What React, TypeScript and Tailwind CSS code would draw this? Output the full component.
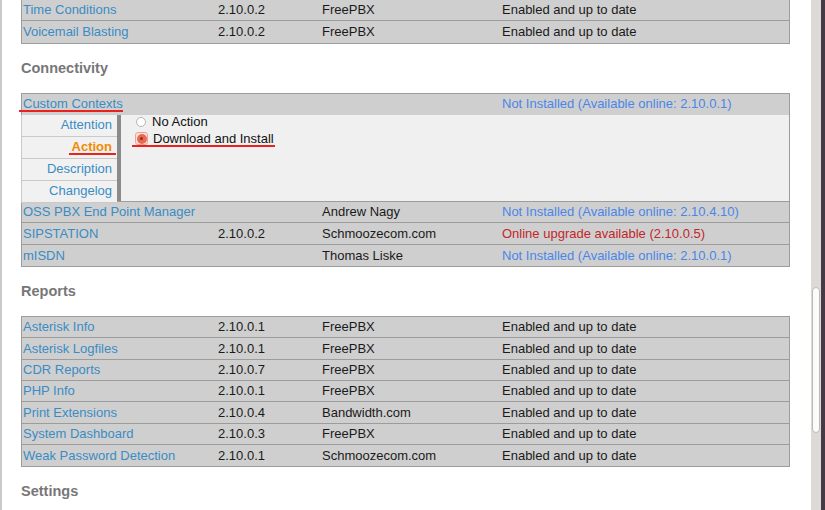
const blue = "text-[#3a8cc4]";

type Row = { name: string; version?: string; author?: string; status: string; tone?: "ok" | "new" | "up" };

const misc: Row[] = [
  { name: "Time Conditions", version: "2.10.0.2", author: "FreePBX", status: "Enabled and up to date" },
  { name: "Voicemail Blasting", version: "2.10.0.2", author: "FreePBX", status: "Enabled and up to date" },
];

const connectivity: Row[] = [
  { name: "OSS PBX End Point Manager", author: "Andrew Nagy", status: "Not Installed (Available online: 2.10.4.10)", tone: "new" },
  { name: "SIPSTATION", version: "2.10.0.2", author: "Schmoozecom.com", status: "Online upgrade available (2.10.0.5)", tone: "up" },
  { name: "mISDN", author: "Thomas Liske", status: "Not Installed (Available online: 2.10.0.1)", tone: "new" },
];

const reports: Row[] = [
  { name: "Asterisk Info", version: "2.10.0.1", author: "FreePBX", status: "Enabled and up to date" },
  { name: "Asterisk Logfiles", version: "2.10.0.1", author: "FreePBX", status: "Enabled and up to date" },
  { name: "CDR Reports", version: "2.10.0.7", author: "FreePBX", status: "Enabled and up to date" },
  { name: "PHP Info", version: "2.10.0.1", author: "FreePBX", status: "Enabled and up to date" },
  { name: "Print Extensions", version: "2.10.0.4", author: "Bandwidth.com", status: "Enabled and up to date" },
  { name: "System Dashboard", version: "2.10.0.3", author: "FreePBX", status: "Enabled and up to date" },
  { name: "Weak Password Detection", version: "2.10.0.1", author: "Schmoozecom.com", status: "Enabled and up to date" },
];

function ModuleRow({ row, last }: { row: Row; last?: boolean }) {
  const statusColor =
    row.tone === "new" ? "text-[#4a86e8]" : row.tone === "up" ? "text-[#c3262a]" : "text-[#1a1a1a]";
  return (
    <div
      className={`grid h-[21.33px] grid-cols-[196px_104px_180px_1fr] items-center bg-[#cfcfcf] ${
        last ? "" : "border-b border-[#9c9c9c]"
      }`}
    >
      <span className={`pl-px ${blue}`}>{row.name}</span>
      <span className="text-[#1a1a1a]">{row.version}</span>
      <span className="text-[#1a1a1a]">{row.author}</span>
      <span className={statusColor}>{row.status}</span>
    </div>
  );
}

function Heading({ children }: { children: string }) {
  return <h3 className="my-4 text-[14.5px] leading-[17px] font-bold text-[#777]">{children}</h3>;
}

function Tab({ label, active }: { label: string; active?: boolean }) {
  return (
    <div className="flex h-[22px] items-center justify-end border-b border-l border-[#c9c9c9] bg-[#f1f1f1] pr-[5px] pb-[2px]">
      {active ? (
        <span className="relative font-bold text-[#f28a00]">
          {label}
          <span className="absolute -left-[3px] right-[-4px] top-[16px] h-[2px] bg-[#e8231f]" />
        </span>
      ) : (
        <span className={blue}>{label}</span>
      )}
    </div>
  );
}

export default function App() {
  return (
    <div className="flex h-[510px] w-[825px] overflow-hidden bg-white font-['Liberation_Sans',Arial,sans-serif] text-[13px]">
      <div className="w-[811px] border-l-2 border-[#cacaca] pl-[19px] pr-[21px]">
        <div className="-mt-px border border-[#9c9c9c]">
          {misc.map((r, i) => (
            <ModuleRow key={r.name} row={r} last={i === misc.length - 1} />
          ))}
        </div>

        <Heading>Connectivity</Heading>
        <div className="border border-[#9c9c9c]">
          <div className="grid h-[21.33px] grid-cols-[196px_104px_180px_1fr] items-center bg-[#cfcfcf] pb-px">
            <span className={`relative pl-px ${blue}`}>
              Custom Contexts
              <span className="absolute -left-[3px] top-[16px] h-[2px] w-[104px] bg-[#e8231f]" />
            </span>
            <span />
            <span />
            <span className="text-[#4a86e8]">Not Installed (Available online: 2.10.0.1)</span>
          </div>
          <div className="flex h-[87px] border-b border-[#9c9c9c] bg-[#f0f0f0]">
            <div className="w-[96px] -ml-px">
              <Tab label="Attention" />
              <Tab label="Action" active />
              <Tab label="Description" />
              <Tab label="Changelog" />
            </div>
            <div className="w-[4px] bg-[#8a8a8a]" />
            <div className="flex flex-col pl-[14px] -mt-px">
              <label className="flex h-[16px] items-center gap-[6px] text-[#111]">
                <span className="ml-px h-[10px] w-[10px] rounded-full border border-[#b5b5b5] bg-white" />
                No Action
              </label>
              <label className="relative flex h-[18px] items-center gap-[5px] text-[#111]">
                <span className="flex h-[13px] w-[13px] items-center justify-center rounded-[3px] border border-[#f0a090] bg-[#fbe3dc]">
                  <span className="flex h-[10px] w-[10px] items-center justify-center rounded-full bg-[#e86a52]">
                    <span className="h-[3px] w-[3px] rounded-full bg-[#9c2a1a]" />
                  </span>
                </span>
                Download and Install
                <span className="absolute -left-[3px] top-[15px] h-[2px] w-[143px] bg-[#e8231f]" />
              </label>
            </div>
          </div>
          {connectivity.map((r, i) => (
            <ModuleRow key={r.name} row={r} last={i === connectivity.length - 1} />
          ))}
        </div>

        <Heading>Reports</Heading>
        <div className="border border-[#9c9c9c]">
          {reports.map((r, i) => (
            <ModuleRow key={r.name} row={r} last={i === reports.length - 1} />
          ))}
        </div>

        <Heading>Settings</Heading>
      </div>

      <div className="relative w-[10px] bg-[#dcd9d6]">
        <div className="absolute left-[1px] top-[287px] h-[146px] w-[8px] rounded-[4px] border border-[#bdbab6] bg-[#fbfbfb]" />
      </div>
      <div className="w-[4px] bg-[#453a45]" />
    </div>
  );
}
